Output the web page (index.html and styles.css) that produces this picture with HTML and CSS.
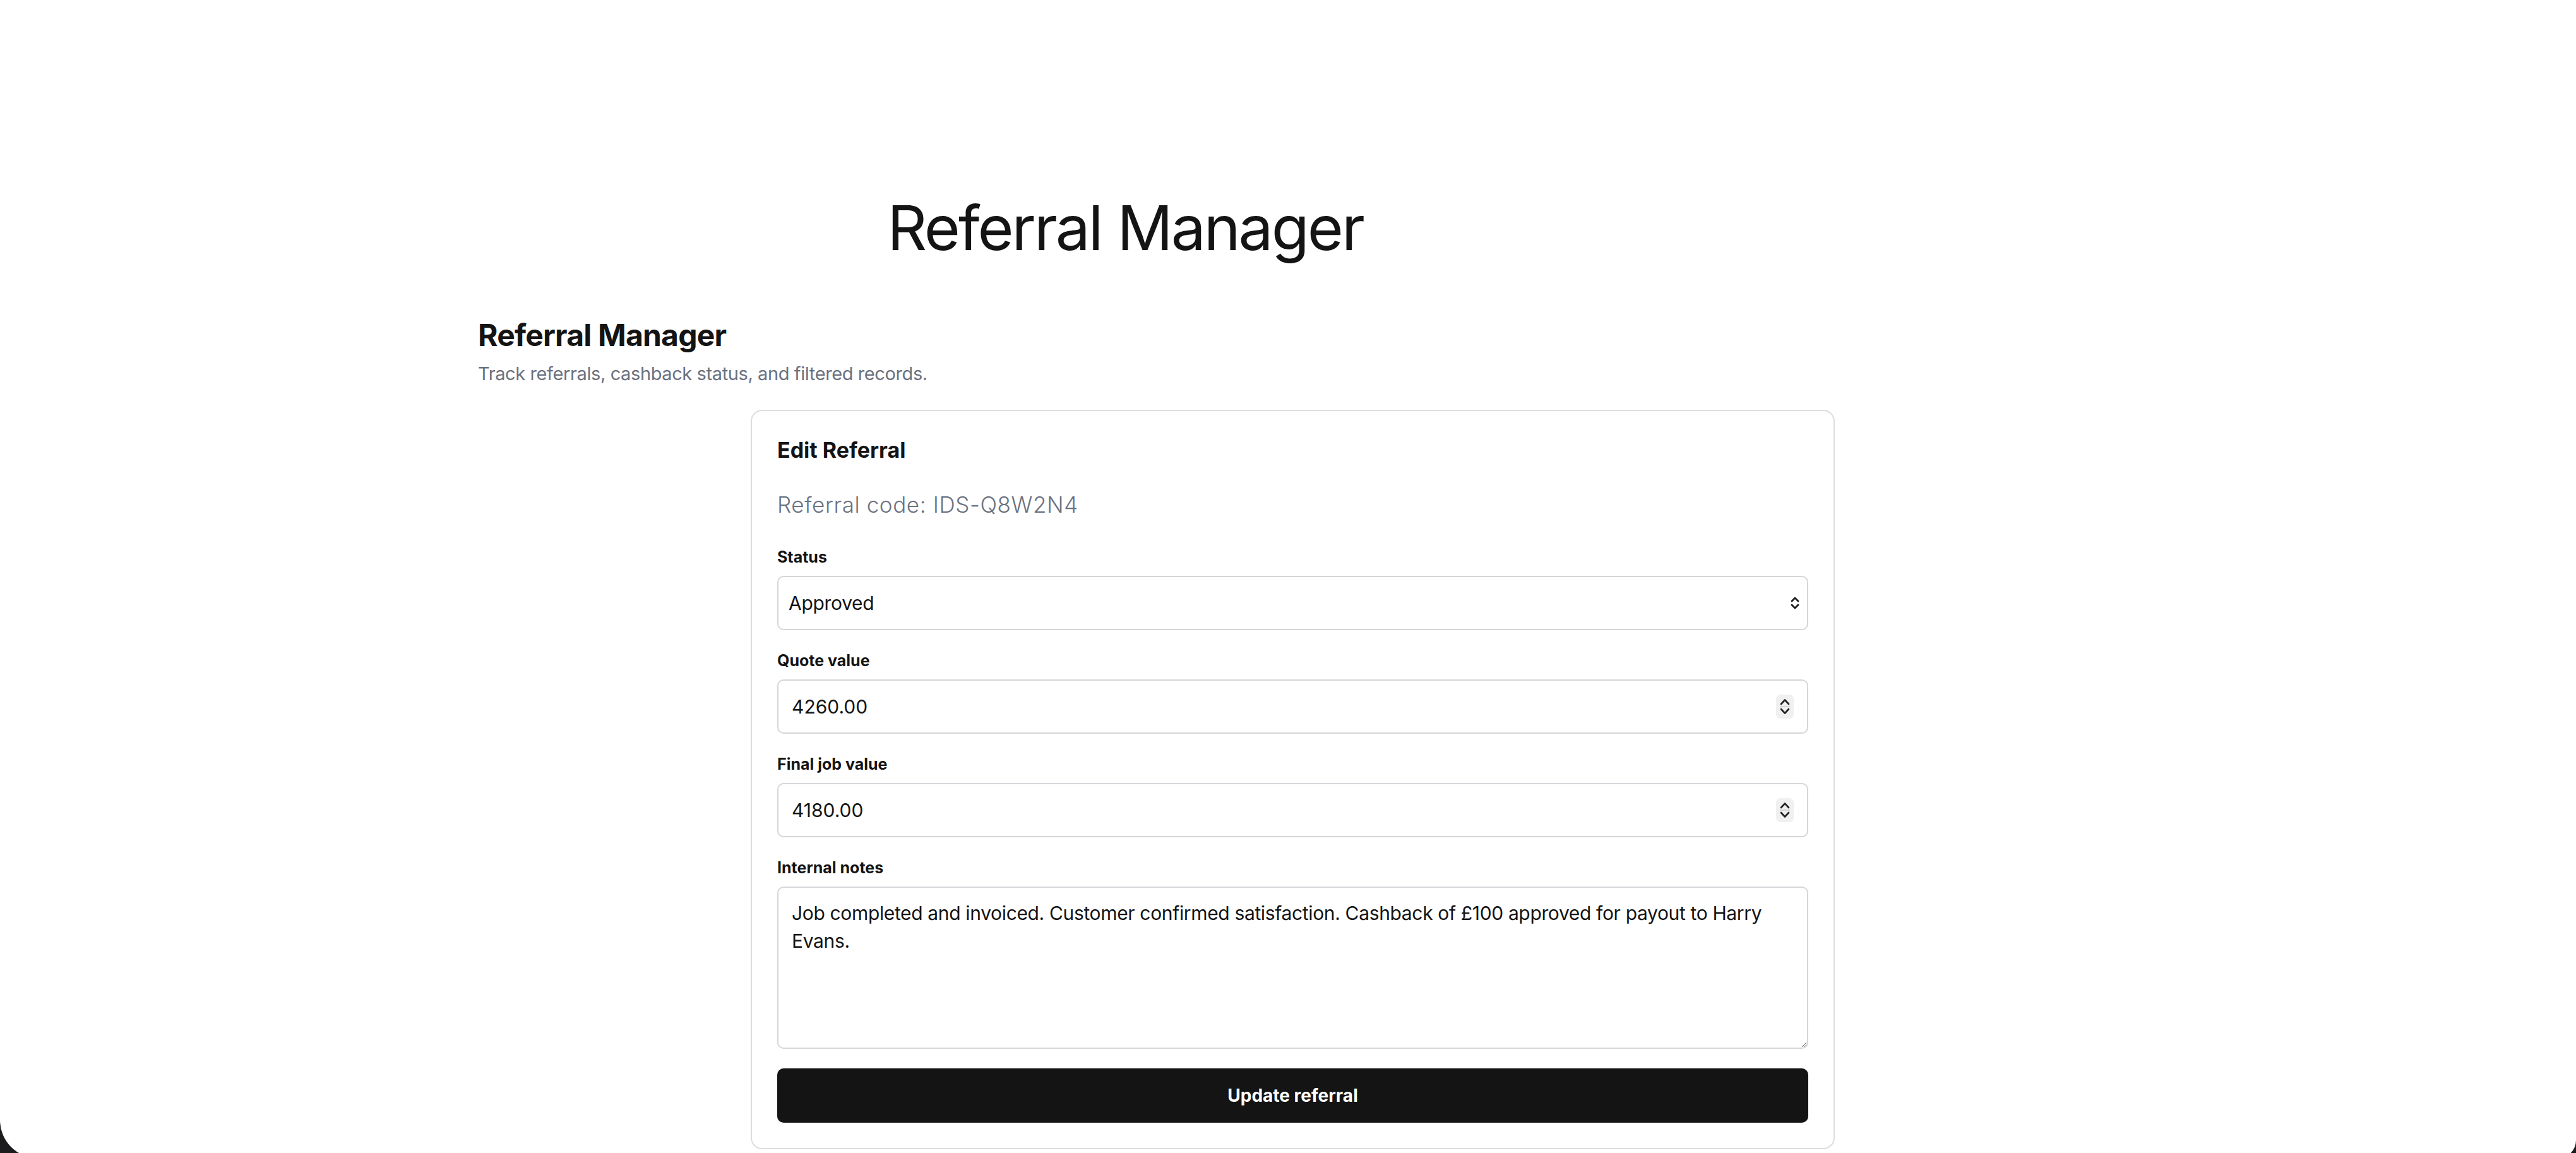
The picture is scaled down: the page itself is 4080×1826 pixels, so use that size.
FILE: index.html
```html
<!DOCTYPE html>
<html lang="en">
<head>
    <meta charset="UTF-8">
    <meta name="viewport" content="width=device-width, initial-scale=1.0">
    <title>Referral Manager</title>
    <link rel="stylesheet" href="styles.css">
</head>
<body>
    <div class="page">
        <header class="hero">
            <h1 class="hero-title">Referral Manager</h1>
        </header>

        <section class="manager">
            <h2 class="manager-title">Referral Manager</h2>
            <p class="manager-sub">Track referrals, cashback status, and filtered records.</p>

            <form class="card" onsubmit="return false">
                <h3 class="card-title">Edit Referral</h3>
                <p class="card-code">Referral code: IDS-Q8W2N4</p>

                <div class="fields">
                    <div class="field">
                        <label class="field-label" for="status">Status</label>
                        <div class="control-wrap">
                            <select class="control control-select" id="status">
                                <option>Pending</option>
                                <option>Contacted</option>
                                <option selected>Approved</option>
                                <option>Paid</option>
                                <option>Rejected</option>
                            </select>
                            <svg class="select-icon" width="16" height="26" viewBox="0 0 16 26">
                                <path d="M3 10 L8 5 L13 10 M3 16 L8 21 L13 16" fill="none" stroke="#1a1a1a" stroke-width="2.8" stroke-linecap="round" stroke-linejoin="round"/>
                            </svg>
                        </div>
                    </div>

                    <div class="field">
                        <label class="field-label" for="quote">Quote value</label>
                        <div class="control-wrap">
                            <input class="control" id="quote" type="number" step="0.01" value="4260.00">
                            <svg class="spin" width="28" height="38" viewBox="0 0 28 38">
                                <rect width="28" height="38" rx="7" fill="#f0f0f0"/>
                                <path d="M8 15 L14 8.5 L20 15" fill="none" stroke="#222" stroke-width="2.6" stroke-linecap="round" stroke-linejoin="round"/>
                                <line x1="6" y1="19" x2="22" y2="19" stroke="#d6d6d6" stroke-width="2"/>
                                <path d="M8 23 L14 29.5 L20 23" fill="none" stroke="#222" stroke-width="2.6" stroke-linecap="round" stroke-linejoin="round"/>
                            </svg>
                        </div>
                    </div>

                    <div class="field">
                        <label class="field-label" for="final">Final job value</label>
                        <div class="control-wrap">
                            <input class="control" id="final" type="number" step="0.01" value="4180.00">
                            <svg class="spin" width="28" height="38" viewBox="0 0 28 38">
                                <rect width="28" height="38" rx="7" fill="#f0f0f0"/>
                                <path d="M8 15 L14 8.5 L20 15" fill="none" stroke="#222" stroke-width="2.6" stroke-linecap="round" stroke-linejoin="round"/>
                                <line x1="6" y1="19" x2="22" y2="19" stroke="#d6d6d6" stroke-width="2"/>
                                <path d="M8 23 L14 29.5 L20 23" fill="none" stroke="#222" stroke-width="2.6" stroke-linecap="round" stroke-linejoin="round"/>
                            </svg>
                        </div>
                    </div>

                    <div class="field">
                        <label class="field-label" for="notes">Internal notes</label>
                        <textarea class="control control-notes" id="notes">Job completed and invoiced. Customer confirmed satisfaction. Cashback of £100 approved for payout to Harry Evans.</textarea>
                    </div>

                    <button class="button" type="submit">Update referral</button>
                </div>
            </form>
        </section>
    </div>
</body>
</html>
```

FILE: styles.css
```css
html {
    background-color: #1c1c1e;
    overflow: hidden;
}

body {
    margin: 0;
    height: 1834px;
    background-color: #ffffff;
    border-radius: 0 0 28px 60px;
    font-family: Inter, "Noto Sans", sans-serif;
    color: #141414;
}

.page {
    max-width: 2596px;
    margin: 0 auto;
    padding-left: 15px;
    box-sizing: border-box;
}

.hero {
    max-width: 2050px;
    padding-top: 302px;
    text-align: center;
}
.hero-title {
    margin: 0;
    font-size: 98px;
    font-weight: 400;
    line-height: 1.2;
    letter-spacing: -3px;
}

.manager {
    padding-top: 82px;
}
.manager-title {
    margin: 0;
    font-size: 48px;
    font-weight: 700;
    line-height: 1.2;
    letter-spacing: -0.8px;
}
.manager-sub {
    margin: 13px 0 0;
    font-size: 29px;
    line-height: 1.4;
    color: #6b7280;
    letter-spacing: -0.4px;
}

.card {
    width: 1717px;
    box-sizing: border-box;
    margin: 36px auto 0;
    padding: 40px;
    border: 2px solid #dcdde0;
    border-radius: 18px;
    background-color: #ffffff;
}
.card-title {
    margin: 0;
    font-size: 34px;
    font-weight: 700;
    line-height: 1.3;
}
.card-code {
    margin: 42px 0 0;
    font-size: 35px;
    font-weight: 300;
    line-height: 1.3;
    color: #6b7280;
    letter-spacing: 0.6px;
}

.fields {
    display: flex;
    flex-direction: column;
    gap: 31px;
    margin-top: 43px;
}
.field {
    display: flex;
    flex-direction: column;
    gap: 12px;
}
.field-label {
    font-size: 25px;
    font-weight: 700;
    line-height: 35px;
}

.control-wrap {
    position: relative;
}
.control {
    display: block;
    width: 100%;
    height: 86px;
    box-sizing: border-box;
    padding: 0 21px;
    border: 2px solid #d4d6da;
    border-radius: 10px;
    background-color: #ffffff;
    font-family: Inter, "Noto Sans", sans-serif;
    font-size: 30px;
    color: #141414;
    outline: none;
    appearance: none;
    -moz-appearance: textfield;
}
.control::-webkit-inner-spin-button,
.control::-webkit-outer-spin-button {
    -webkit-appearance: none;
    margin: 0;
}
.control-select {
    padding-left: 16px;
    letter-spacing: -0.3px;
}
.control-notes {
    height: 257px;
    padding: 18px 21px;
    line-height: 44px;
    letter-spacing: -0.35px;
    resize: vertical;
}

.select-icon {
    position: absolute;
    right: 13px;
    top: 30px;
    pointer-events: none;
}
.spin {
    position: absolute;
    right: 23px;
    top: 24px;
    pointer-events: none;
}

.button {
    height: 86px;
    border: none;
    border-radius: 10px;
    background-color: #141414;
    color: #ffffff;
    font-family: Inter, "Noto Sans", sans-serif;
    font-size: 28px;
    font-weight: 700;
    cursor: pointer;
}
```
